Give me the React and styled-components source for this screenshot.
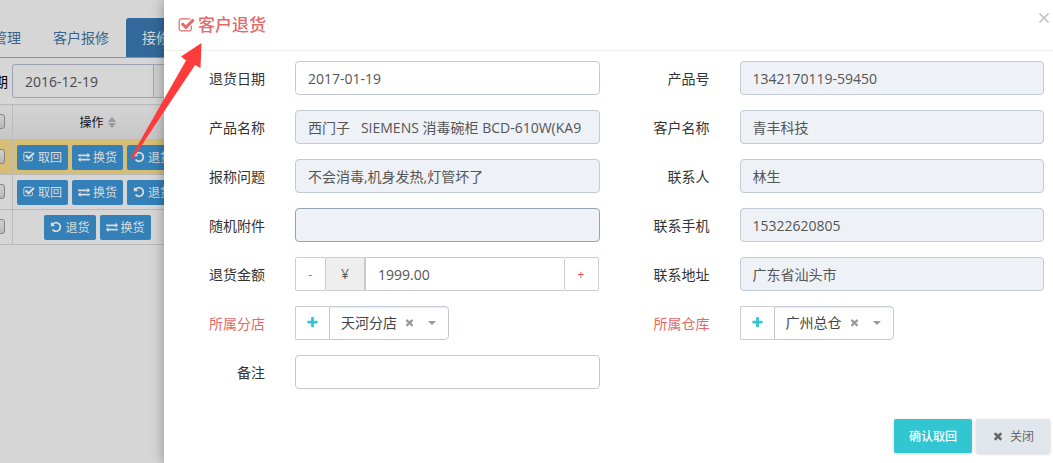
import React from "react";
import styled, { createGlobalStyle } from "styled-components";

const ICONS = {
  check:
    "M1472 930v318q0 119-84.5 203.5t-203.5 84.5h-832q-119 0-203.5-84.5t-84.5-203.5v-832q0-119 84.5-203.5t203.5-84.5h832q63 0 117 25 15 7 18 23 3 17-9 29l-49 49q-10 10-23 10-3 0-9-2-23-6-45-6h-832q-66 0-113 47t-47 113v832q0 66 47 113t113 47h832q66 0 113-47t47-113v-254q0-13 9-22l64-64q10-10 23-10 6 0 12 3 20 8 20 29zm231-489l-814 814q-24 24-57 24t-57-24l-430-430q-24-24-24-57t24-57l110-110q24-24 57-24t57 24l263 263 647-647q24-24 57-24t57 24l110 110q24 24 24 57t-24 57z",
  exchange:
    "M1792 1184v192q0 13-9.5 22.5t-22.5 9.5h-1376v192q0 13-9.5 22.5t-22.5 9.5q-12 0-24-10l-319-320q-9-9-9-22 0-14 9-23l320-320q9-9 23-9 13 0 22.5 9.5t9.5 22.5v192h1376q13 0 22.5 9.5t9.5 22.5zm0-544q0 14-9 23l-320 320q-9 9-23 9-13 0-22.5-9.5t-9.5-22.5v-192h-1376q-13 0-22.5-9.5t-9.5-22.5v-192q0-13 9.5-22.5t22.5-9.5h1376v-192q0-14 9-23t23-9q12 0 24 10l319 319q9 9 9 23z",
  undo: "M1664 896q0 156-61 298t-164 245-245 164-298 61q-172 0-327-72.5t-264-204.5q-7-10-6.5-22.5t8.5-20.5l137-138q10-9 25-9 16 2 23 12 73 95 179 147t225 52q104 0 198.5-40.5t163.5-109.5 109.5-163.5 40.5-198.5-40.5-198.5-109.5-163.5-163.5-109.5-198.5-40.5q-98 0-188 35.5t-160 101.5l137 138q31 30 14 69-17 40-59 40h-448q-26 0-45-19t-19-45v-448q0-42 40-59 39-17 69 14l130 129q107-101 244.5-156.5t284.5-55.5q156 0 298 61t245 164 164 245 61 298z",
  plus: "M1600 736v192q0 40-28 68t-68 28h-416v416q0 40-28 68t-68 28h-192q-40 0-68-28t-28-68v-416h-416q-40 0-68-28t-28-68v-192q0-40 28-68t68-28h416v-416q0-40 28-68t68-28h192q40 0 68 28t28 68v416h416q40 0 68 28t28 68z",
  times:
    "M1490 1322q0 40-28 68l-136 136q-28 28-68 28t-68-28l-294-294-294 294q-28 28-68 28t-68-28l-136-136q-28-28-28-68t28-68l294-294-294-294q-28-28-28-68t28-68l136-136q28-28 68-28t68 28l294 294 294-294q28-28 68-28t68 28l136 136q28 28 28 68t-28 68l-294 294 294 294q28 28 28 68z",
};

const Icon = ({ name, size = 14 }) => (
  <svg
    width={size}
    height={size}
    viewBox="0 0 1792 1792"
    fill="currentColor"
    aria-hidden="true"
  >
    <path d={ICONS[name]} />
  </svg>
);

const rows = [
  { id: 1, active: true, actions: ["take", "swap", "back"] },
  { id: 2, active: false, actions: ["take", "swap", "back"] },
  { id: 3, active: false, actions: ["back", "swap"] },
];

const actionMap = {
  take: { icon: "check", text: "取回" },
  swap: { icon: "exchange", text: "换货" },
  back: { icon: "undo", text: "退货" },
};

const TextField = ({ id, label, value = "", readOnly, focused }) => (
  <Field>
    <Label htmlFor={id}>{label}</Label>
    <Input id={id} defaultValue={value} readOnly={readOnly} $focused={focused} />
  </Field>
);

const SelectField = ({ id, label, value }) => (
  <Field>
    <Label htmlFor={id} $required>
      {label}
    </Label>
    <Group>
      <AddButton type="button" aria-label={`新增${label}`}>
        <Icon name="plus" size={13} />
      </AddButton>
      <SelectBox>
        <Select id={id} defaultValue={value}>
          <option>{value}</option>
        </Select>
        <ClearButton type="button" aria-label="清除">
          <Icon name="times" size={11} />
        </ClearButton>
        <Caret />
      </SelectBox>
    </Group>
  </Field>
);

const App = () => {
  return (
    <React.Fragment>
      <GlobalStyle />
      <Page>
        <Content>
          <Tabs>
            <Tab href="#manage">管理</Tab>
            <Tab href="#report">客户报修</Tab>
            <Tab href="#receive" $active>
              接修管理
            </Tab>
          </Tabs>
          <Filter>
            <FilterLabel htmlFor="filterDate">日期</FilterLabel>
            <FilterInput id="filterDate" defaultValue="2016-12-19" />
            <FilterAddon />
          </Filter>
          <Table>
            <thead>
              <tr>
                <CheckHead>
                  <Checkbox type="checkbox" aria-label="全选" />
                </CheckHead>
                <ActionHead>
                  <HeadText>
                    操作
                    <svg width="8" height="11" viewBox="0 0 8 11" fill="#999">
                      <path d="M4 0L8 5H0zM4 11L0 6H8z" />
                    </svg>
                  </HeadText>
                </ActionHead>
              </tr>
            </thead>
            <tbody>
              {rows.map((row) => (
                <Row key={row.id} $active={row.active}>
                  <CheckCell>
                    <Checkbox type="checkbox" aria-label={`选择${row.id}`} />
                  </CheckCell>
                  <td>
                    <Actions>
                      {row.actions.map((key) => (
                        <ActionButton key={key} type="button">
                          <Icon name={actionMap[key].icon} size={12} />
                          {actionMap[key].text}
                        </ActionButton>
                      ))}
                    </Actions>
                  </td>
                </Row>
              ))}
            </tbody>
          </Table>
        </Content>

        <Modal role="dialog" aria-labelledby="modalTitle">
          <Header>
            <Title id="modalTitle">
              <Icon name="check" size={17} />
              客户退货
            </Title>
            <CloseButton type="button" aria-label="关闭窗口">
              <svg width="10" height="10" viewBox="0 0 10 10" stroke="#bfbfbf" strokeWidth="1.5">
                <path d="M0.5 0.5L9.5 9.5M9.5 0.5L0.5 9.5" />
              </svg>
            </CloseButton>
          </Header>
          <Form>
            <Column>
              <TextField id="date" label="退货日期" value="2017-01-19" />
              <TextField
                id="product"
                label="产品名称"
                value="西门子   SIEMENS 消毒碗柜 BCD-610W(KA9"
                readOnly
              />
              <TextField id="problem" label="报称问题" value="不会消毒,机身发热,灯管坏了" readOnly />
              <TextField id="parts" label="随机附件" readOnly focused />
              <Field>
                <Label htmlFor="amount">退货金额</Label>
                <AmountGroup>
                  <StepButton type="button" $width={31}>
                    -
                  </StepButton>
                  <Currency>¥</Currency>
                  <AmountInput id="amount" defaultValue="1999.00" />
                  <StepButton type="button" $width={35}>
                    +
                  </StepButton>
                </AmountGroup>
              </Field>
              <SelectField id="branch" label="所属分店" value="天河分店" />
              <TextField id="remark" label="备注" />
            </Column>
            <Column>
              <TextField id="number" label="产品号" value="1342170119-59450" readOnly />
              <TextField id="customer" label="客户名称" value="青丰科技" readOnly />
              <TextField id="contact" label="联系人" value="林生" readOnly />
              <TextField id="phone" label="联系手机" value="15322620805" readOnly />
              <TextField id="address" label="联系地址" value="广东省汕头市" readOnly />
              <SelectField id="warehouse" label="所属仓库" value="广州总仓" />
            </Column>
          </Form>
          <Footer>
            <FooterButton type="button" $primary>
              确认取回
            </FooterButton>
            <FooterButton type="button">
              <Icon name="times" size={12} />
              关闭
            </FooterButton>
          </Footer>
        </Modal>

        <Arrow width="72" height="117" viewBox="0 0 72 117" fill="#ff3b3b" aria-hidden="true">
          <path d="M71.5 0L51 13.5L56 17.5L1 114L2.5 116L65 22L70.5 25Z" />
        </Arrow>
      </Page>
    </React.Fragment>
  );
};

const GlobalStyle = createGlobalStyle`
  * {
    box-sizing: border-box;
  }
  body {
    margin: 0;
    color: #333;
    background-color: #d6d6d6;
  }
  body, button, input, select {
    font-family: "Open Sans", "Noto Sans CJK SC", sans-serif;
    font-size: 14px;
  }
  svg {
    flex: none;
  }
`;

const Page = styled.div`
  position: relative;
  min-height: 100vh;
  overflow: hidden;
`;

/* the list behind the dialog, scrolled a little to the right */
const Content = styled.div`
  position: absolute;
  top: 0;
  left: -23px;
  right: 0;
  padding-top: 18px;
`;

const Tabs = styled.nav`
  display: flex;
  height: 40px;
  border-bottom: 1px solid #8093b4;
`;

const Tab = styled.a`
  padding: 0 16px;
  line-height: 40px;
  white-space: nowrap;
  text-decoration: none;
  border-radius: 3px 3px 0 0;
  color: ${(props) => (props.$active ? "#d6d6d6" : "#39648d")};
  background-color: ${(props) => (props.$active ? "#33699a" : "transparent")};
  margin-left: ${(props) => (props.$active ? "1px" : "0")};
`;

const Filter = styled.div`
  display: flex;
  align-items: center;
  padding: 6px 0;
`;

const FilterLabel = styled.label`
  width: 35px;
  padding-left: 3px;
  color: #000;
`;

const FilterInput = styled.input`
  width: 142px;
  height: 34px;
  padding: 0 12px;
  border: 1px solid #9aa2b4;
  border-radius: 3px 0 0 3px;
  background-color: #d6d6d6;
  color: #4a4a4a;
`;

const FilterAddon = styled.span`
  width: 40px;
  height: 34px;
  border: 1px solid #9aa2b4;
  border-left-width: 0;
  background-color: #cfcfcf;
`;

const Table = styled.table`
  width: 206px;
  border-collapse: collapse;
  table-layout: fixed;
  font-size: 12px;

  & th,
  & td {
    height: 35px;
    padding: 0;
    border: 1px solid #bababa;
  }

  & th {
    background: linear-gradient(#d4d4d4, #c6c6c6);
  }
`;

const CheckHead = styled.th`
  width: 35px;
  text-align: right;
`;

const ActionHead = styled.th`
  font-weight: 400;
  color: #111;
`;

const HeadText = styled.span`
  display: flex;
  align-items: center;
  justify-content: center;
  gap: 4px;
`;

const Row = styled.tr`
  background-color: ${(props) => (props.$active ? "#d6be76" : "#d6d6d6")};
`;

const CheckCell = styled.td`
  text-align: right;
`;

const Checkbox = styled.input`
  appearance: none;
  width: 13px;
  height: 15px;
  margin: 0 7px 2px 0;
  vertical-align: middle;
  border: 1px solid #858585;
  border-radius: 3px;
  background: linear-gradient(#cfcfcf, #b8b8b8);
`;

const Actions = styled.div`
  display: flex;
  justify-content: center;
  gap: 4px;
`;

const ActionButton = styled.button`
  display: flex;
  align-items: center;
  gap: 3px;
  height: 25px;
  padding: 0 6px;
  border: 0;
  border-radius: 2px;
  font-size: 12px;
  white-space: nowrap;
  color: #dcdcdc;
  background-color: #3381b8;
`;

const Modal = styled.section`
  position: relative;
  min-height: 100vh;
  margin-left: 164px;
  background-color: #fff;
  box-shadow: 0 0 12px rgba(0, 0, 0, 0.35);
`;

const Header = styled.header`
  display: flex;
  justify-content: space-between;
  height: 51px;
  padding: 0 4px 0 14px;
  border-bottom: 1px solid #eee;
`;

const Title = styled.h4`
  display: flex;
  align-items: center;
  gap: 3px;
  margin: 0;
  font-size: 17px;
  font-weight: 500;
  line-height: 48px;
  color: #e26a6a;
`;

const CloseButton = styled.button`
  display: flex;
  align-self: flex-start;
  margin-top: 13px;
  padding: 0;
  border: 0;
  background: none;
`;

const Form = styled.form`
  display: grid;
  grid-template-columns: 1fr 1fr;
  padding-top: 10px;
`;

const Column = styled.div`
  display: flex;
  flex-direction: column;
  gap: 15px;
  min-width: 0;
`;

const Field = styled.div`
  display: grid;
  grid-template-columns: 101px minmax(0, 1fr);
  column-gap: 30px;
  padding-right: 9px;
`;

const Label = styled.label`
  line-height: 36px;
  height: 34px;
  text-align: right;
  color: ${(props) => (props.$required ? "#e26a6a" : "#333")};
`;

const Input = styled.input`
  width: 100%;
  height: 34px;
  padding: 0 12px;
  border: 1px solid ${(props) => (props.$focused ? "#93a1bb" : "#c2cad8")};
  border-radius: 4px;
  outline: none;
  color: #555;
  background-color: ${(props) => (props.readOnly ? "#eef1f5" : "#fff")};
`;

const Group = styled.div`
  display: flex;
`;

const AmountGroup = styled(Group)`
  padding-right: 1px;
`;

const StepButton = styled.button`
  width: ${(props) => props.$width}px;
  height: 34px;
  padding: 0;
  border: 1px solid #ccc;
  border-radius: 2px;
  font-size: 12px;
  color: #e7505a;
  background-color: #fff;
`;

const Currency = styled.span`
  width: 39px;
  line-height: 32px;
  text-align: center;
  color: #555;
  border: 1px solid #ccc;
  border-left-width: 0;
  background-color: #eee;
`;

const AmountInput = styled.input`
  flex: 1;
  min-width: 0;
  height: 34px;
  padding: 0 12px;
  border: 1px solid #c2cad8;
  border-right-width: 0;
  color: #555;
`;

const AddButton = styled.button`
  display: flex;
  align-items: center;
  justify-content: center;
  width: 34px;
  height: 34px;
  padding: 0 0 2px;
  border: 1px solid #ccc;
  border-right-width: 0;
  border-radius: 2px 0 0 2px;
  color: #32c5d2;
  background-color: #fff;
`;

const SelectBox = styled.div`
  display: flex;
  align-items: center;
  width: 120px;
  height: 34px;
  padding: 0 11px;
  border: 1px solid #c2cad8;
  border-radius: 0 4px 4px 0;
  box-shadow: inset 0 1px 1px rgba(0, 0, 0, 0.075);
  color: #999;
`;

const Select = styled.select`
  appearance: none;
  width: 62px;
  height: 30px;
  padding: 0 0 2px;
  border: 0;
  color: #444;
  background: none;
`;

const ClearButton = styled.button`
  display: flex;
  margin: 0 13px 2px 1px;
  padding: 0;
  border: 0;
  color: #999;
  background: none;
`;

const Caret = styled.span`
  border: 4px solid transparent;
  border-top-color: #999;
  border-bottom-width: 0;
`;

const Footer = styled.footer`
  display: flex;
  justify-content: flex-end;
  gap: 4px;
  padding: 30px 3px 10px;
`;

const FooterButton = styled.button`
  display: flex;
  align-items: center;
  justify-content: center;
  gap: 6px;
  height: 34px;
  padding: 0 ${(props) => (props.$primary ? 15 : 16)}px;
  border: 0;
  border-radius: 2px;
  font-size: 12px;
  font-weight: ${(props) => (props.$primary ? 500 : 400)};
  color: ${(props) => (props.$primary ? "#fff" : "#666")};
  background-color: ${(props) => (props.$primary ? "#32c5d2" : "#e1e5ec")};
  box-shadow: 0 1px 3px rgba(0, 0, 0, 0.2);
`;

/* callout drawn across the list and the dialog title */
const Arrow = styled.svg`
  position: absolute;
  top: 43px;
  left: 130px;
  pointer-events: none;
`;

export default App;
